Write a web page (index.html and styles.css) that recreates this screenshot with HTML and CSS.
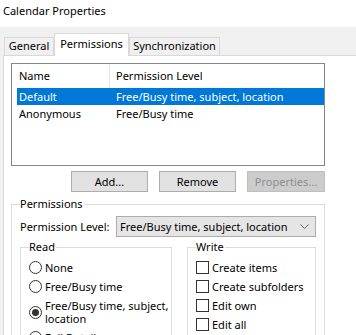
FILE: index.html
```html
<!DOCTYPE html>
<html lang="en">
<head>
<meta charset="UTF-8">
<title>Calendar Properties</title>
<link rel="stylesheet" href="styles.css">
</head>
<body>

<div class="titlebar">Calendar Properties</div>

<div class="dialog">
    <div class="tabs">
        <div class="tab tab-general">General</div>
        <div class="tab tab-perms active">Permissions</div>
        <div class="tab tab-sync">Synchronization</div>
    </div>

    <div class="panel">
        <div class="listbox">
            <div class="list-head">
                <div class="head-name">Name</div>
                <div class="head-level">Permission Level</div>
            </div>
            <div class="list-row selected">
                <span class="col-name">Default</span>
                <span class="col-level">Free/Busy time, subject, location</span>
            </div>
            <div class="list-row">
                <span class="col-name">Anonymous</span>
                <span class="col-level">Free/Busy time</span>
            </div>
        </div>

        <div class="button-row">
            <button class="btn btn-add">Add...</button>
            <button class="btn btn-remove">Remove</button>
            <button class="btn btn-props" disabled>Properties...</button>
        </div>

        <fieldset class="group group-perms">
            <legend>Permissions</legend>
            <div class="level-row">
                <span class="level-label">Permission Level:</span>
                <div class="combo">
                    <span>Free/Busy time, subject, location</span>
                    <svg class="chevron" width="9" height="5" viewBox="0 0 9 5"><path d="M0.5 0.5 L4.5 4.5 L8.5 0.5" fill="none" stroke="#606060" stroke-width="1"/></svg>
                </div>
            </div>

            <div class="subgroups">
                <fieldset class="group group-read">
                    <legend>Read</legend>
                    <div class="option"><span class="radio"></span><span>None</span></div>
                    <div class="option"><span class="radio"></span><span>Free/Busy time</span></div>
                    <div class="option"><span class="radio checked"></span><span>Free/Busy time, subject, location</span></div>
                    <div class="option"><span class="radio"></span><span>Full Details</span></div>
                </fieldset>
                <fieldset class="group group-write">
                    <legend>Write</legend>
                    <div class="option"><span class="check"></span><span>Create items</span></div>
                    <div class="option"><span class="check"></span><span>Create subfolders</span></div>
                    <div class="option"><span class="check"></span><span>Edit own</span></div>
                    <div class="option"><span class="check"></span><span>Edit all</span></div>
                </fieldset>
            </div>
        </fieldset>
    </div>
</div>

</body>
</html>
```

FILE: styles.css
```css
body {
    margin: 0;
    width: 356px;
    height: 335px;
    overflow: hidden;
    background-color: #f0f0f0;
    font-family: "Noto Sans", "Open Sans", sans-serif;
    font-size: 11px;
    color: #000;
}

.titlebar {
    background-color: #fff;
    height: 24px;
    padding: 3px 0 0 3px;
    line-height: 16px;
}

.dialog {
    padding: 6px 0 0 3px;
}

/* tab strip */
.tabs {
    display: flex;
    align-items: flex-end;
    padding-left: 1px;
    height: 22px;
}

.tab {
    box-sizing: border-box;
    height: 18px;
    border: 1px solid #d9d9d9;
    border-bottom: none;
    background-color: #f0f0f0;
    text-align: center;
    line-height: 16px;
}

.tab-general { width: 50px; }
.tab-perms { width: 75px; }
.tab-sync { width: 91px; }

.tab.active {
    position: relative;
    z-index: 1;
    height: 23px;
    margin-bottom: -1px;
    background-color: #fff;
    line-height: 19px;
}

.panel {
    height: 300px;
    background-color: #fff;
    border: 1px solid #d9d9d9;
    border-right: none;
    padding: 7px 0 0 7px;
}

/* list view */
.listbox {
    box-sizing: border-box;
    width: 314px;
    height: 103px;
    border: 1px solid #828790;
}

.list-head {
    display: flex;
    height: 24px;
    line-height: 24px;
}

.head-name {
    width: 90px;
    padding-left: 7px;
    border-right: 1px solid #e5e5e5;
}

.head-level {
    padding-left: 6px;
}

.list-row {
    display: flex;
    height: 17px;
    line-height: 17px;
    margin-left: 5px;
    white-space: nowrap;
}

.list-row.selected {
    background-color: #0078d7;
    color: #fff;
}

.col-name {
    width: 97px;
    padding-left: 2px;
}

/* buttons */
.button-row {
    display: flex;
    gap: 11px;
    padding-left: 60px;
    margin-top: 5px;
}

.btn {
    box-sizing: border-box;
    height: 21px;
    padding: 0;
    border: 1px solid #adadad;
    background-color: #e1e1e1;
    font-family: inherit;
    font-size: 11px;
    color: #000;
}

.btn-add, .btn-remove { width: 77px; }
.btn-props { width: 78px; }

.btn:disabled {
    background-color: #cccccc;
    border-color: #bfbfbf;
    color: #8f8f8f;
}

/* group boxes */
.group {
    margin: 0;
    padding: 0 0 0 8px;
    border: 1px solid #dcdcdc;
    min-width: 0;
}

.group legend {
    padding: 0 1px 0 0;
    line-height: 16px;
}

.group-perms {
    box-sizing: border-box;
    width: 314px;
    height: 200px;
    margin-top: 4px;
}

.level-row {
    display: flex;
    align-items: center;
    margin-top: 4px;
    white-space: nowrap;
}

.level-label {
    width: 96px;
}

.combo {
    box-sizing: border-box;
    display: flex;
    align-items: center;
    justify-content: space-between;
    width: 200px;
    height: 21px;
    padding: 0 6px 0 3px;
    border: 1px solid #acacac;
    background-color: #e5e5e5;
}

.subgroups {
    display: flex;
    gap: 15px;
    margin-top: 2px;
}

.group-read {
    box-sizing: border-box;
    width: 152px;
    height: 120px;
    padding-top: 6px;
    padding-right: 2px;
}

.group-write {
    box-sizing: border-box;
    width: 129px;
    height: 120px;
    padding-top: 6px;
}

.option {
    display: flex;
    align-items: center;
    gap: 3px;
    line-height: 13px;
    margin-bottom: 6px;
}

.radio {
    box-sizing: border-box;
    flex: none;
    width: 13px;
    height: 13px;
    border: 1px solid #333;
    border-radius: 50%;
    background-color: #fff;
    display: flex;
    align-items: center;
    justify-content: center;
}

.radio.checked::after {
    content: "";
    width: 7px;
    height: 7px;
    border-radius: 50%;
    background-color: #333;
}

.check {
    box-sizing: border-box;
    flex: none;
    width: 13px;
    height: 13px;
    border: 1px solid #333;
    background-color: #fff;
}
```
